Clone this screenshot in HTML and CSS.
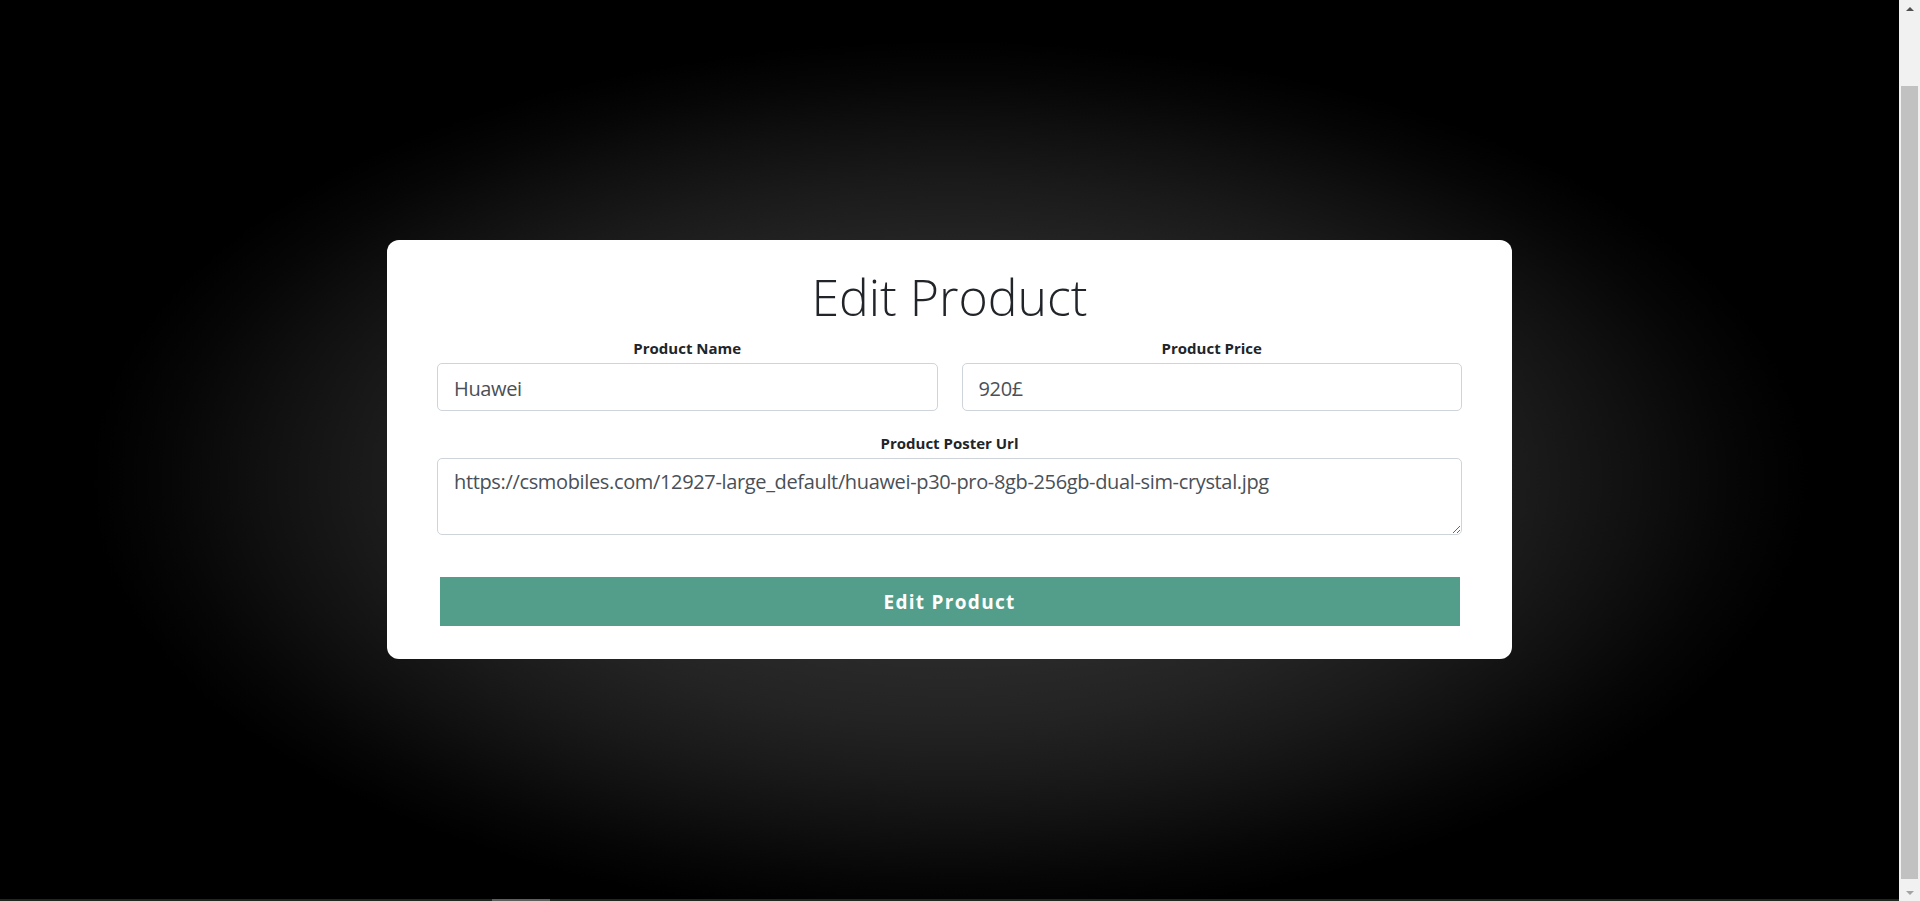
FILE: index.html
```html
<!DOCTYPE html>
<html lang="en">
<head>
<meta charset="utf-8">
<title>Edit Product</title>
<link rel="stylesheet" href="styles.css">
</head>
<body>
<div class="viewport">
  <div class="main-col">
    <main class="stage">
      <form class="card">
        <h1 class="title">Edit Product</h1>
        <div class="row">
          <div class="field">
            <label class="label" for="pname">Product Name</label>
            <input class="control" id="pname" type="text" value="Huawei">
          </div>
          <div class="field">
            <label class="label" for="pprice">Product Price</label>
            <input class="control" id="pprice" type="text" value="920£">
          </div>
        </div>
        <div class="field">
          <label class="label" for="purl">Product Poster Url</label>
          <textarea class="control area" id="purl" rows="2">https://csmobiles.com/12927-large_default/huawei-p30-pro-8gb-256gb-dual-sim-crystal.jpg</textarea>
        </div>
        <button class="submit" type="button">Edit Product</button>
      </form>
    </main>
    <div class="hbar"><div class="hbar-thumb"></div></div>
  </div>
  <div class="scrollbar">
    <div class="sb-btn"><span class="arrow-up"></span></div>
    <div class="sb-track"><div class="sb-thumb"></div></div>
    <div class="sb-btn"><span class="arrow-down"></span></div>
  </div>
</div>
</body>
</html>
```
FILE: styles.css
```css
html, body {
  margin: 0;
  padding: 0;
  height: 100%;
  background: #000;
  overflow: hidden;
}

.viewport {
  display: flex;
  height: 901px;
  font-family: "Open Sans", "Noto Sans", sans-serif;
}

.main-col {
  flex: 1;
  display: flex;
  flex-direction: column;
}

.stage {
  flex: 1;
  display: flex;
  flex-direction: column;
  align-items: center;
  padding-top: 240px;
  box-sizing: border-box;
  background: radial-gradient(ellipse 860px 440px at 50% 480px,
    #333333 0%, #2c2c2c 35%, #232323 55%, #1a1a1a 68%, #101010 80%, #060606 91%, #000 100%);
}

.hbar {
  height: 2px;
  display: flex;
  background: #1f281f;
}

.hbar-thumb {
  margin-left: 492px;
  width: 58px;
  background: #5e5e5e;
}

.card {
  width: 1125px;
  box-sizing: border-box;
  background: #fff;
  border-radius: 12px;
  padding: 27px 50px 33px;
  display: flex;
  flex-direction: column;
}

.title {
  margin: 0 0 10px;
  font-weight: 300;
  font-size: 50px;
  line-height: 60px;
  text-align: center;
  color: #212529;
}

.row {
  display: flex;
  gap: 24px;
  margin-bottom: 21px;
}

.row .field {
  flex: 1;
}

.field {
  display: flex;
  flex-direction: column;
}

.label {
  font-weight: 700;
  font-size: 15px;
  line-height: 22px;
  text-align: center;
  color: #212529;
  margin-bottom: 4px;
}

.control {
  box-sizing: border-box;
  height: 48px;
  width: 100%;
  margin: 0;
  padding: 2px 16px 0;
  border: 1px solid #ced4da;
  border-radius: 5px;
  background: #fff;
  color: #495057;
  font-family: "Open Sans", "Noto Sans", sans-serif;
  font-size: 20px;
  line-height: 30px;
  letter-spacing: -0.35px;
  outline: none;
}

.area {
  height: 77px;
  padding: 8px 16px;
  resize: vertical;
  overflow: hidden;
}

.submit {
  display: block;
  width: 1020px;
  height: 49px;
  margin: 42px auto 0;
  padding: 0;
  border: 0;
  border-radius: 0;
  background: #529e8a;
  color: #fff;
  font-family: "Open Sans", "Noto Sans", sans-serif;
  font-weight: 700;
  font-size: 19px;
  letter-spacing: 1.3px;
  cursor: pointer;
}

.scrollbar {
  width: 21px;
  flex: none;
  display: flex;
  flex-direction: column;
  background: #f1f1f1;
}

.sb-btn {
  height: 17px;
  display: flex;
  align-items: center;
  justify-content: center;
}

.arrow-up {
  width: 0;
  height: 0;
  border-left: 4px solid transparent;
  border-right: 4px solid transparent;
  border-bottom: 4px solid #505050;
}

.arrow-down {
  width: 0;
  height: 0;
  border-left: 4px solid transparent;
  border-right: 4px solid transparent;
  border-top: 4px solid #a3a3a3;
}

.sb-track {
  flex: 1;
  padding: 69px 2px 5px;
  display: flex;
}

.sb-thumb {
  flex: 1;
  background: #c1c1c1;
}
```
